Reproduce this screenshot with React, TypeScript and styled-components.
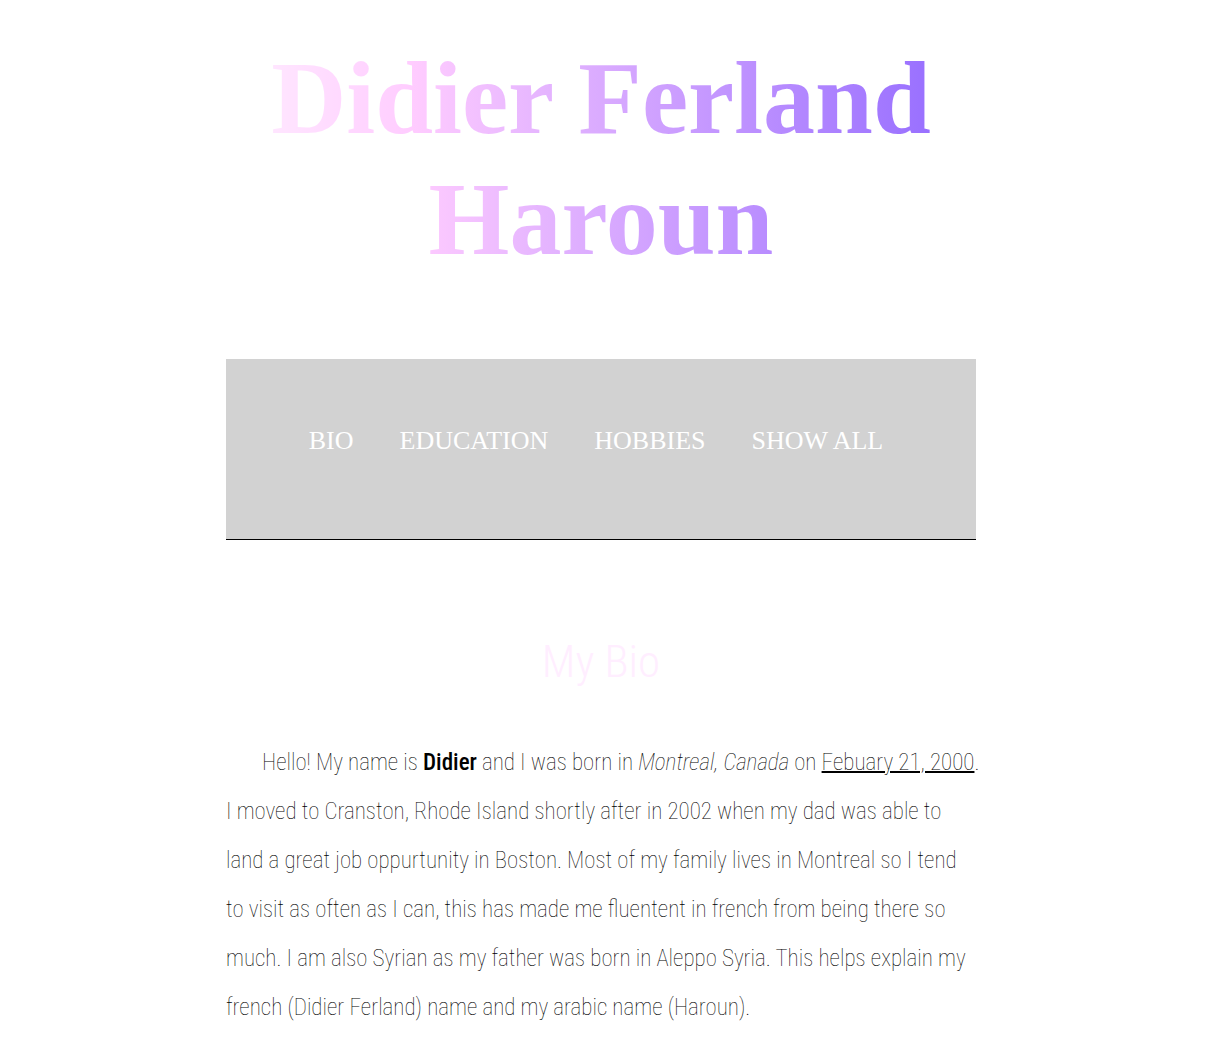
import React from "react";
import styled, { createGlobalStyle } from "styled-components";

const GlobalStyle = createGlobalStyle`
  body {
    margin: 0;
    background: #ffffff;
    color: #000000;
  }
`;

const Page = styled.div`
  padding: 37px 17px 0 0;
`;

const Column = styled.div`
  max-width: 750px;
  margin: 0 auto;
`;

const Title = styled.h1`
  margin: 0 0 80px;
  font: bold 104px/121px "Liberation Serif", serif;
  text-align: center;
  color: transparent;
  background: linear-gradient(to right, #ffeeff, #ffccff 25%, #9068ff);
  background-clip: text;
  -webkit-background-clip: text;
`;

const Nav = styled.nav`
  display: flex;
  justify-content: center;
  gap: 46px;
  padding: 67px 10px 83px 0;
  background: #d2d2d2;
  border-bottom: 1px solid #000000;
`;

const NavLink = styled.a`
  font: 26px/30px "Liberation Serif", serif;
  color: #ffffff;
  text-decoration: none;
  white-space: nowrap;
`;

const Section = styled.section`
  padding-top: 97px;
  font-family: "Roboto Condensed", Roboto, sans-serif;
  font-weight: 100;
`;

const SectionTitle = styled.h2`
  margin: 0 0 51px;
  font-size: 45px;
  line-height: 50px;
  font-weight: 300;
  text-align: center;
  color: #ffeeff;
`;

const Paragraph = styled.p`
  margin: 0 -4px 0 0;
  font-size: 23px;
  line-height: 49px;
  text-indent: 36px;
`;

const Strong = styled.strong`
  font-weight: 500;
`;

const Underlined = styled.u`
  text-decoration-thickness: 2px;
`;

const links = [
  { label: "BIO", href: "#bio" },
  { label: "EDUCATION", href: "#education" },
  { label: "HOBBIES", href: "#hobbies" },
  { label: "SHOW ALL", href: "#all" },
];

export default function App() {
  return (
    <Page>
      <GlobalStyle />
      <Column>
        <Title>Didier Ferland Haroun</Title>
        <Nav>
          {links.map((link) => (
            <NavLink key={link.label} href={link.href}>
              {link.label}
            </NavLink>
          ))}
        </Nav>
        <Section id="bio">
          <SectionTitle>My Bio</SectionTitle>
          <Paragraph>
            Hello! My name is <Strong>Didier</Strong> and I was born in <em>Montreal, Canada</em> on{" "}
            <Underlined>Febuary 21, 2000</Underlined>. I moved to Cranston, Rhode Island shortly
            after in 2002 when my dad was able to land a great job oppurtunity in Boston. Most of my
            family lives in Montreal so I tend to&nbsp;visit as often as I can, this has made me
            fluentent in french from being there so much. I am also Syrian as my father was born in
            Aleppo Syria. This helps explain my french (Didier Ferland) name and my arabic name
            (Haroun).
          </Paragraph>
        </Section>
      </Column>
    </Page>
  );
}
